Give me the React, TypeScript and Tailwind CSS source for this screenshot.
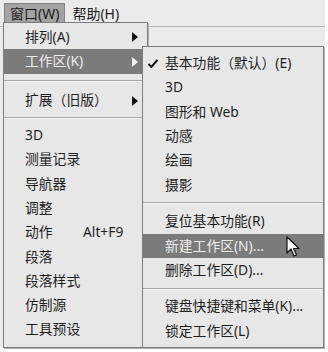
import React from 'react';

const font = { fontFamily: '"Noto Sans", "Noto Sans CJK SC", sans-serif' };

const Arrow: React.FC<{ light?: boolean }> = ({ light }) => (
  <svg width="6" height="10" viewBox="0 0 6 10" className="absolute right-[9px]">
    <path d="M0 0 L6 5 L0 10 Z" fill={light ? '#f2f2f2' : '#111'} />
  </svg>
);

const Row: React.FC<{
  label: string;
  h?: string;
  active?: boolean;
  arrow?: boolean;
  extra?: string;
}> = ({ label, h = 'h-[24.3px]', active, arrow, extra }) => (
  <div
    className={`relative flex items-center pl-[21px] ${h} ${
      active ? 'bg-[#7b7b7b] text-[#ececec]' : 'text-[#1e1e1e]'
    }`}
  >
    <span>{label}</span>
    {extra && <span className="absolute left-[79px]">{extra}</span>}
    {arrow && <Arrow light={active} />}
  </div>
);

const Sep: React.FC<{ h: string }> = ({ h }) => (
  <div className={`flex items-center ${h}`}>
    <div className="w-full border-t border-[#a9a9a9] border-b border-b-[#f4f4f4]" />
  </div>
);

const SubRow: React.FC<{ label: string; active?: boolean; checked?: boolean }> = ({
  label,
  active,
  checked,
}) => (
  <div
    className={`relative flex items-center pl-[22px] h-[24.4px] ${
      active ? 'bg-[#7b7b7b] text-[#ececec]' : 'text-[#1e1e1e]'
    }`}
  >
    {checked && (
      <svg width="10" height="9" viewBox="0 0 10 9" className="absolute left-[5px]">
        <path d="M0.5 4.8 L3.4 8 L9.5 0.8" stroke="#111" strokeWidth="2" fill="none" />
      </svg>
    )}
    <span>{label}</span>
  </div>
);

export default function App() {
  return (
    <div className="relative w-[328px] h-[352px] bg-white overflow-hidden text-[13.8px]" style={font}>
      <div className="w-[325px] h-[348px] bg-[#ebebeb]">
        <div className="flex items-center h-[27px] border-b border-[#b5b5b5] pl-1 gap-[7px] text-[14px]">
          <div className="px-[5px] h-[21px] mt-[1px] flex items-center bg-[#a3a3a3] border border-[#828282] text-[#1a1a1a]">
            窗口(W)
          </div>
          <div className="text-[#1a1a1a]">帮助(H)</div>
        </div>
      </div>

      {/* main dropdown */}
      <div className="absolute left-[3px] top-[22px] w-[145px] h-[326px] bg-[#e7e7e7] border border-[#7d7d7d] shadow-[1px_1px_0_#b0b0b0] pt-[2px]">
        <Row label="排列(A)" arrow />
        <Row label="工作区(K)" arrow active h="h-[25px]" />
        <Sep h="h-[14px]" />
        <Row label="扩展（旧版）" arrow h="h-[25px]" />
        <Sep h="h-[10px]" />
        <Row label="3D" />
        <Row label="测量记录" />
        <Row label="导航器" />
        <Row label="调整" />
        <Row label="动作" extra="Alt+F9" />
        <Row label="段落" />
        <Row label="段落样式" />
        <Row label="仿制源" />
        <Row label="工具预设" />
      </div>

      {/* submenu */}
      <div className="absolute left-[142px] top-[46px] w-[182px] h-[302px] bg-[#e7e7e7] border border-[#7d7d7d] shadow-[1px_1px_0_#b0b0b0] pt-[4px]">
        <SubRow label="基本功能（默认）(E)" checked />
        <SubRow label="3D" />
        <SubRow label="图形和 Web" />
        <SubRow label="动感" />
        <SubRow label="绘画" />
        <SubRow label="摄影" />
        <Sep h="h-[12px]" />
        <SubRow label="复位基本功能(R)" />
        <SubRow label="新建工作区(N)..." active />
        <SubRow label="删除工作区(D)..." />
        <Sep h="h-[12px]" />
        <SubRow label="键盘快捷键和菜单(K)..." />
        <SubRow label="锁定工作区(L)" />
      </div>

      {/* mouse cursor */}
      <svg width="14" height="22" viewBox="0 0 14 22" className="absolute left-[286px] top-[236px]">
        <path
          d="M1 1 L1 17 L5 13 L8 20 L10.5 19 L7.5 12.5 L13 12.5 Z"
          fill="#fff"
          stroke="#111"
          strokeWidth="1.2"
          strokeLinejoin="round"
        />
      </svg>
    </div>
  );
}
